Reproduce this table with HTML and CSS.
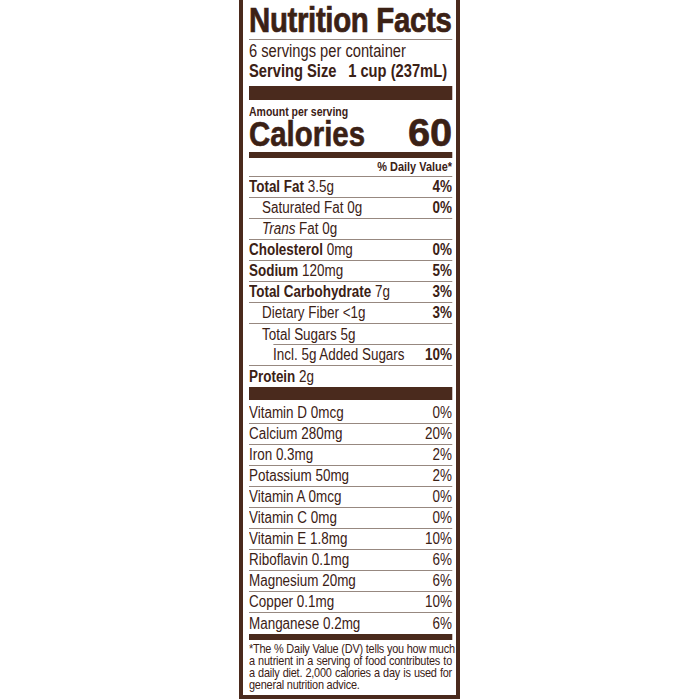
FILE: index.html
```html
<!DOCTYPE html>
<html>
<head>
<meta charset="utf-8">
<link rel="stylesheet" href="styles.css">
</head>
<body>
<div class="label">
  <div class="inner">
    <h1 class="title">Nutrition Facts</h1>
    <div class="servings">6 servings per container</div>
    <div class="serving-size"><span>Serving Size</span><span>1 cup (237mL)</span></div>
    <div class="bar bar-thick"></div>
    <div class="amount">Amount per serving</div>
    <div class="calories"><span class="cal-label">Calories</span><span class="cal-value">60</span></div>
    <div class="bar bar-medium"></div>
    <div class="dv-head">% Daily Value*</div>
    <div class="row"><span><b>Total Fat</b> 3.5g</span><b>4%</b></div>
    <div class="row indent1"><span>Saturated Fat 0g</span><b>0%</b></div>
    <div class="row indent1"><span><i>Trans</i> Fat 0g</span></div>
    <div class="row"><span><b>Cholesterol</b> 0mg</span><b>0%</b></div>
    <div class="row"><span><b>Sodium</b> 120mg</span><b>5%</b></div>
    <div class="row"><span><b>Total Carbohydrate</b> 7g</span><b>3%</b></div>
    <div class="row indent1"><span>Dietary Fiber &lt;1g</span><b>3%</b></div>
    <div class="row indent1 short-line"><span>Total Sugars 5g</span></div>
    <div class="row indent2"><span>Incl. 5g Added Sugars</span><b>10%</b></div>
    <div class="row no-line"><span><b>Protein</b> 2g</span></div>
    <div class="bar bar-thick2"></div>
    <div class="vit">
      <div class="row"><span>Vitamin D 0mcg</span><span>0%</span></div>
      <div class="row"><span>Calcium 280mg</span><span>20%</span></div>
      <div class="row"><span>Iron 0.3mg</span><span>2%</span></div>
      <div class="row"><span>Potassium 50mg</span><span>2%</span></div>
      <div class="row"><span>Vitamin A 0mcg</span><span>0%</span></div>
      <div class="row"><span>Vitamin C 0mg</span><span>0%</span></div>
      <div class="row"><span>Vitamin E 1.8mg</span><span>10%</span></div>
      <div class="row"><span>Riboflavin 0.1mg</span><span>6%</span></div>
      <div class="row"><span>Magnesium 20mg</span><span>6%</span></div>
      <div class="row"><span>Copper 0.1mg</span><span>10%</span></div>
      <div class="row no-line"><span>Manganese 0.2mg</span><span>6%</span></div>
    </div>
    <div class="bar bar-medium"></div>
    <p class="foot">
      <span class="fl">*The % Daily Value (DV) tells you how much</span>
      <span class="fl">a nutrient in a serving of food contributes to</span>
      <span class="fl">a daily diet. 2,000 calories a day is used for</span>
      <span class="fl last">general nutrition advice.</span>
    </p>
  </div>
</div>
</body>
</html>
```

FILE: styles.css
```css
html, body {
  margin: 0;
  padding: 0;
  background: #fff;
}
body {
  font-family: "Liberation Sans", Arial, sans-serif;
  color: #3b2115;
}
.label {
  width: 221px;
  box-sizing: border-box;
  margin-left: 239px;
  border: 4px solid #4a2a1d;
  border-top: none;
  padding: 0 4px 0 6px;
}
.inner {
  width: 241.7px;
  transform: scaleX(0.84);
  transform-origin: 0 0;
}
.title {
  margin: 0;
  padding-top: 1px;
  font-size: 35px;
  font-weight: 700;
  line-height: 38px;
  letter-spacing: -0.4px;
  -webkit-text-stroke: 0.7px #3b2115;
  border-bottom: 1px solid #978880;
  white-space: nowrap;
}
.servings {
  font-size: 17.5px;
  line-height: 18px;
  padding-top: 2px;
}
.serving-size {
  display: flex;
  gap: 14px;
  font-size: 17.5px;
  font-weight: 700;
  line-height: 18px;
  padding-top: 2px;
  white-space: nowrap;
}
.bar {
  background: #4a2a1d;
}
.bar-thick {
  height: 14px;
  margin-top: 6px;
}
.amount {
  font-size: 12.5px;
  font-weight: 700;
  line-height: 14px;
  padding-top: 5px;
}
.calories {
  display: flex;
  justify-content: space-between;
  align-items: baseline;
  box-sizing: border-box;
  height: 33px;
  padding-top: 1px;
  font-weight: 700;
  -webkit-text-stroke: 0.6px #3b2115;
}
.cal-label {
  font-size: 35px;
  line-height: 24px;
}
.cal-value {
  display: inline-block;
  font-size: 39.5px;
  line-height: 24px;
  transform: scaleX(1.2);
  transform-origin: 100% 50%;
}
.bar-medium {
  height: 6px;
}
.dv-head {
  height: 18px;
  text-align: right;
  font-size: 13px;
  font-weight: 700;
  line-height: 18px;
  border-bottom: 1px solid #978880;
}
.row {
  display: flex;
  justify-content: space-between;
  align-items: center;
  box-sizing: border-box;
  height: 21px;
  font-size: 16px;
  border-bottom: 1px solid #978880;
  white-space: nowrap;
}
.row.no-line {
  border-bottom: none;
}
.indent1 > span:first-child {
  padding-left: 15.5px;
}
.indent2 > span:first-child {
  padding-left: 28.6px;
}
.short-line {
  border-bottom: none;
  position: relative;
}
.short-line::after {
  content: "";
  position: absolute;
  left: 28.6px;
  right: 0;
  bottom: 0;
  border-bottom: 1px solid #978880;
}
.bar-thick2 {
  height: 13px;
}
.vit {
  padding-top: 3px;
}
.foot {
  margin: 0;
  padding: 2.6px 0 3.6px;
  font-size: 13px;
  line-height: 12.2px;
  letter-spacing: -0.25px;
}
.fl {
  display: block;
  white-space: nowrap;
  text-align: justify;
  text-align-last: justify;
}
.fl.last {
  text-align-last: left;
}
```
